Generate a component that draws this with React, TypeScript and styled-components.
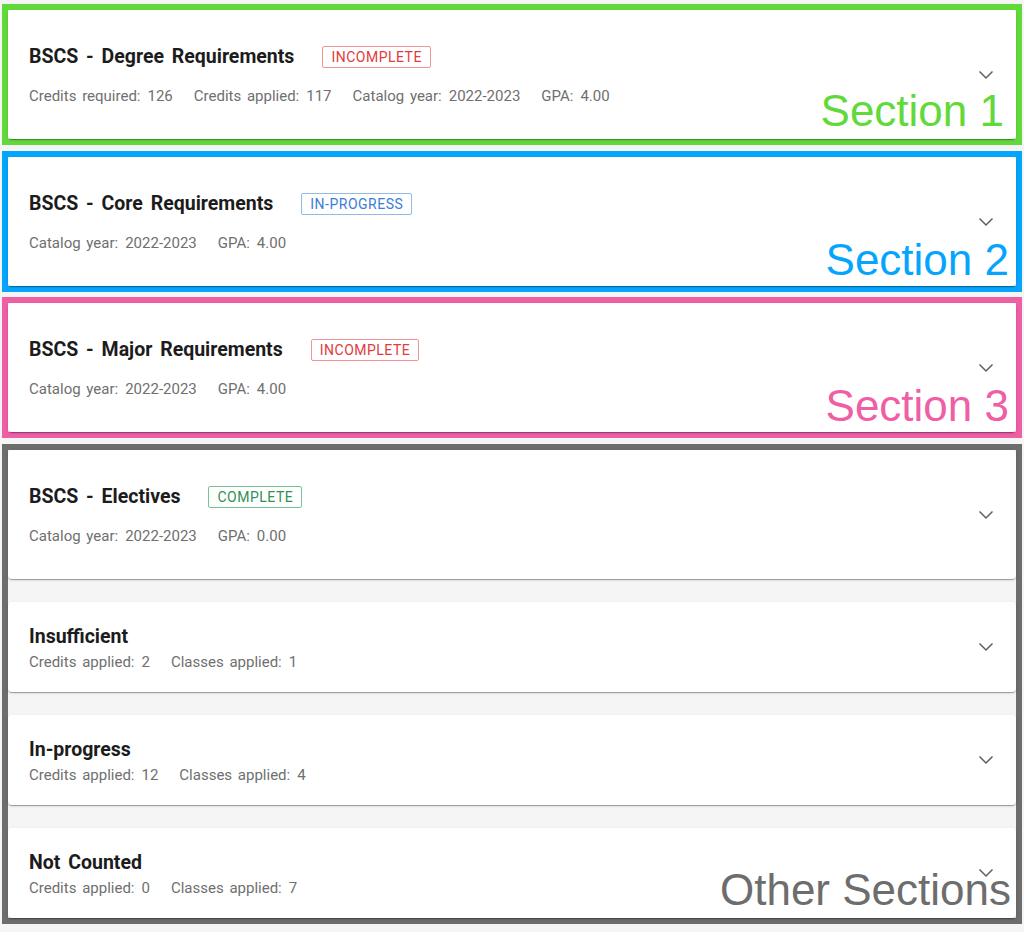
import styled, { createGlobalStyle } from 'styled-components';

const GlobalStyle = createGlobalStyle`
  html, body {
    margin: 0;
    padding: 0;
    background: #f5f5f5;
  }
  body {
    font-family: Roboto, "Noto Sans", sans-serif;
  }
`;

type Tone = 'red' | 'blue' | 'green';

const tones: Record<Tone, { text: string; border: string }> = {
  red: { text: '#e23b3b', border: '#f19595' },
  blue: { text: '#3b7dd6', border: '#93b8ea' },
  green: { text: '#2f8f55', border: '#78c292' },
};

const Page = styled.div`
  display: flex;
  flex-direction: column;
  padding: 4px 2px 0 2px;
  width: 1020px;
`;

const Group = styled.section<{ $color: string; $gap: number }>`
  position: relative;
  display: flex;
  flex-direction: column;
  gap: 23px;
  border: 6px solid ${(p) => p.$color};
  margin-bottom: ${(p) => p.$gap}px;
`;

const Label = styled.div<{ $color: string; $right: number; $bottom: number }>`
  position: absolute;
  right: ${(p) => p.$right}px;
  bottom: ${(p) => p.$bottom}px;
  font-family: "Liberation Sans", Arial, sans-serif;
  font-size: 44px;
  line-height: 1;
  color: ${(p) => p.$color};
  pointer-events: none;
`;

const Card = styled.div<{ $tall: boolean }>`
  display: flex;
  align-items: center;
  height: ${(p) => (p.$tall ? 129 : 90)}px;
  box-sizing: border-box;
  padding: 0 22px 0 21px;
  background: #fff;
  border-radius: 4px;
  box-shadow: 0 2px 1px -1px rgba(0, 0, 0, 0.2), 0 1px 1px 0 rgba(0, 0, 0, 0.14),
    0 1px 3px 0 rgba(0, 0, 0, 0.12);
`;

const Body = styled.div<{ $tall: boolean }>`
  flex: 1;
  display: flex;
  flex-direction: column;
  gap: ${(p) => (p.$tall ? 17 : 3)}px;
  margin-top: ${(p) => (p.$tall ? 1 : 3)}px;
`;

const TitleRow = styled.div`
  display: flex;
  align-items: center;
  gap: 28px;
  height: 24px;
`;

const Title = styled.div`
  font-weight: 700;
  font-size: 19.5px;
  color: #1c1c1c;
  word-spacing: 3px;
  line-height: 24px;
`;

const Badge = styled.span<{ $tone: Tone }>`
  display: inline-flex;
  align-items: center;
  height: 22px;
  box-sizing: border-box;
  padding: 0 8px;
  border: 1px solid ${(p) => tones[p.$tone].border};
  border-radius: 2px;
  color: ${(p) => tones[p.$tone].text};
  font-size: 14px;
  letter-spacing: 0.5px;
`;

const Meta = styled.div`
  display: flex;
  gap: 21px;
  font-size: 15px;
  line-height: 20px;
  color: #6f6f6f;
  word-spacing: 2px;
`;

const Value = styled.span`
  margin-left: 7px;
`;

const Chevron = styled.svg`
  width: 16px;
  height: 10px;
  flex-shrink: 0;
`;

const ExpandIcon = () => (
  <Chevron viewBox="0 0 16 10">
    <polyline points="1.5,1.5 8,8 14.5,1.5" fill="none" stroke="#5f5f5f" strokeWidth="1.5" />
  </Chevron>
);

type Section = {
  title: string;
  badge?: { text: string; tone: Tone };
  meta: [string, string][];
  tall: boolean;
};

const RequirementCard = ({ s }: { s: Section }) => (
  <Card $tall={s.tall}>
    <Body $tall={s.tall}>
      <TitleRow>
        <Title>{s.title}</Title>
        {s.badge && <Badge $tone={s.badge.tone}>{s.badge.text}</Badge>}
      </TitleRow>
      <Meta>
        {s.meta.map(([k, v]) => (
          <span key={k}>
            {k}
            <Value>{v}</Value>
          </span>
        ))}
      </Meta>
    </Body>
    <ExpandIcon />
  </Card>
);

const groups: {
  label: string;
  color: string;
  gap: number;
  right: number;
  bottom: number;
  sections: Section[];
}[] = [
  {
    label: 'Section 1',
    color: '#62d93a',
    gap: 6,
    right: 12,
    bottom: 6,
    sections: [
      {
        title: 'BSCS - Degree Requirements',
        badge: { text: 'INCOMPLETE', tone: 'red' },
        meta: [
          ['Credits required:', '126'],
          ['Credits applied:', '117'],
          ['Catalog year:', '2022-2023'],
          ['GPA:', '4.00'],
        ],
        tall: true,
      },
    ],
  },
  {
    label: 'Section 2',
    color: '#06a5fd',
    gap: 5,
    right: 7,
    bottom: 4,
    sections: [
      {
        title: 'BSCS - Core Requirements',
        badge: { text: 'IN-PROGRESS', tone: 'blue' },
        meta: [
          ['Catalog year:', '2022-2023'],
          ['GPA:', '4.00'],
        ],
        tall: true,
      },
    ],
  },
  {
    label: 'Section 3',
    color: '#ee5fa6',
    gap: 6,
    right: 7,
    bottom: 4,
    sections: [
      {
        title: 'BSCS - Major Requirements',
        badge: { text: 'INCOMPLETE', tone: 'red' },
        meta: [
          ['Catalog year:', '2022-2023'],
          ['GPA:', '4.00'],
        ],
        tall: true,
      },
    ],
  },
  {
    label: 'Other Sections',
    color: '#6d6d6d',
    gap: 0,
    right: 5,
    bottom: 6,
    sections: [
      {
        title: 'BSCS - Electives',
        badge: { text: 'COMPLETE', tone: 'green' },
        meta: [
          ['Catalog year:', '2022-2023'],
          ['GPA:', '0.00'],
        ],
        tall: true,
      },
      {
        title: 'Insufficient',
        meta: [
          ['Credits applied:', '2'],
          ['Classes applied:', '1'],
        ],
        tall: false,
      },
      {
        title: 'In-progress',
        meta: [
          ['Credits applied:', '12'],
          ['Classes applied:', '4'],
        ],
        tall: false,
      },
      {
        title: 'Not Counted',
        meta: [
          ['Credits applied:', '0'],
          ['Classes applied:', '7'],
        ],
        tall: false,
      },
    ],
  },
];

export default function App() {
  return (
    <>
      <GlobalStyle />
      <Page>
        {groups.map((g) => (
          <Group key={g.label} $color={g.color} $gap={g.gap}>
            {g.sections.map((s) => (
              <RequirementCard key={s.title} s={s} />
            ))}
            <Label $color={g.color} $right={g.right} $bottom={g.bottom}>
              {g.label}
            </Label>
          </Group>
        ))}
      </Page>
    </>
  );
}
